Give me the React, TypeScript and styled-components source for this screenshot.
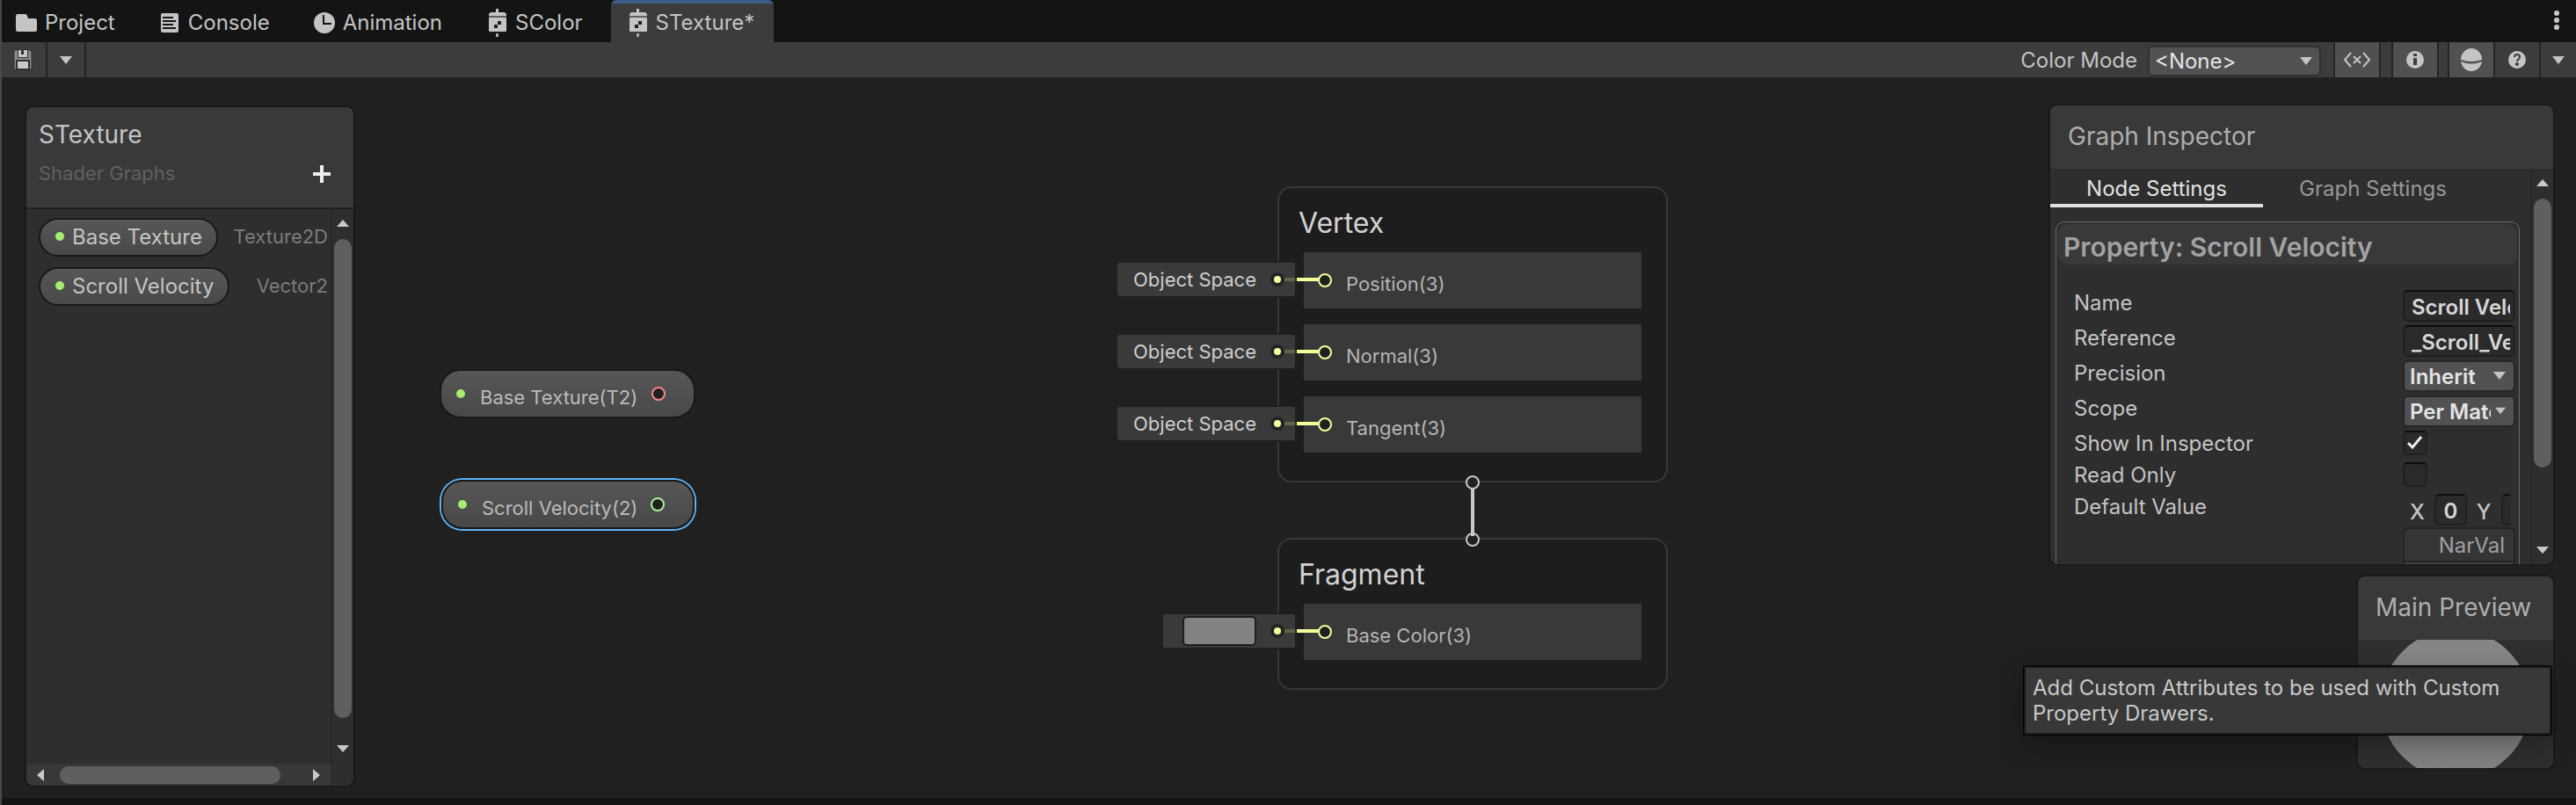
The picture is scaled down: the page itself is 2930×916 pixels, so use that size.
import React from 'react';
import styled, { createGlobalStyle, css } from 'styled-components';

const GlobalStyle = createGlobalStyle`
  *, *::before, *::after { box-sizing: border-box; }
  body { margin: 0; background: #141414; }
  body, button, input, select { font-family: Inter, "Liberation Sans", sans-serif; }
  button { border: 0; padding: 0; background: none; color: inherit; cursor: pointer; }
`;

const Window = styled.div`
  position: relative;
  display: flex;
  flex-direction: column;
  min-height: 100vh;
  color: #c4c4c4;
  font-size: 24px;
  line-height: 29px;
  overflow: hidden;
  &::before {
    content: '';
    position: absolute;
    z-index: 3;
    top: 0;
    bottom: 0;
    left: 0;
    width: 2px;
    background: #484848;
  }
`;

/* ---------- window tabs ---------- */

const TabBar = styled.header`
  display: flex;
  justify-content: space-between;
  height: 48px;
  background: #141414;
`;

const TabList = styled.nav`
  display: flex;
  gap: 12px;
`;

const WindowTab = styled.button<{ $active?: boolean }>`
  display: flex;
  align-items: center;
  gap: 9px;
  padding: 3px 20px 0 18px;
  font-size: 24px;
  line-height: 29px;
  border-radius: 6px 6px 0 0;
  ${(p) =>
    p.$active &&
    css`
      padding-right: 22px;
      background: linear-gradient(#3b5f8a 4px, #3c3c3c 4px);
    `}
`;

const MenuButton = styled.button`
  width: 44px;
`;

/* ---------- toolbar ---------- */

const Toolbar = styled.div`
  display: flex;
  justify-content: space-between;
  height: 40px;
  background: #3c3c3c;
`;

const ToolGroup = styled.div`
  display: flex;
  align-items: stretch;
`;

const ToolButton = styled.button<{ $width: number; $on?: boolean; $left?: boolean; $right?: boolean; $gap?: number }>`
  display: flex;
  align-items: center;
  justify-content: center;
  box-sizing: content-box;
  width: ${(p) => p.$width}px;
  margin-right: ${(p) => p.$gap || 0}px;
  background: ${(p) => (p.$on ? '#505050' : 'transparent')};
  border-style: solid;
  border-color: #242424;
  border-width: 0 ${(p) => (p.$right ? 2 : 0)}px 0 ${(p) => (p.$left ? 2 : 0)}px;
`;

const ColorModeLabel = styled.label`
  display: flex;
  align-items: center;
  gap: 12px;
  margin-right: 14px;
`;

const SelectBox = styled.span<{ $mode?: boolean }>`
  position: relative;
  display: block;
  width: ${(p) => (p.$mode ? 197 : 128)}px;
  ${(p) => p.$mode && 'margin-top: 3px;'}
  svg {
    position: absolute;
    right: ${(p) => (p.$mode ? 10 : 11)}px;
    top: 13px;
    pointer-events: none;
  }
`;

const Select = styled.select<{ $mode?: boolean }>`
  appearance: none;
  display: block;
  width: 100%;
  height: ${(p) => (p.$mode ? 35 : 36)}px;
  padding: 0 ${(p) => (p.$mode ? 30 : 26)}px 0 6px;
  color: #e4e4e4;
  font-size: 24px;
  font-weight: ${(p) => (p.$mode ? 400 : 600)};
  background: #515151;
  border: 2px solid ${(p) => (p.$mode ? '#303030' : '#262626')};
  border-radius: 6px;
`;

/* ---------- graph canvas ---------- */

const Canvas = styled.main`
  position: relative;
  flex: 1;
  min-height: 780px;
  background: #202020;
`;

const Footer = styled.footer`
  height: 8px;
  background: #141414;
`;

const Panel = styled.section`
  position: absolute;
  display: flex;
  flex-direction: column;
  overflow: hidden;
  background: #2e2e2e;
  border: 2px solid #191919;
  border-radius: 10px;
`;

const PanelTitle = styled.h2`
  margin: 0;
  font-size: 28px;
  line-height: 34px;
  font-weight: 400;
`;

const PanelHeader = styled.div`
  padding: 18px 20px 20px;
  color: #aeaeae;
  background: #393939;
`;

/* blackboard */

const Blackboard = styled(Panel)`
  top: 32px;
  bottom: 12px;
  left: 28px;
  width: 376px;
`;

const BoardHeader = styled.div`
  display: flex;
  align-items: flex-end;
  justify-content: space-between;
  padding: 14px 26px 25px 14px;
  background: #393939;
  border-bottom: 2px solid #1f1f1f;
`;

const BoardSubtitle = styled.p`
  margin: 14px 0 0;
  color: #606060;
  font-size: 22px;
  line-height: 27px;
`;

const AddButton = styled.button`
  display: flex;
  align-items: center;
  height: 27px;
`;

const BoardBody = styled.div`
  display: grid;
  flex: 1;
  grid-template-columns: 1fr 26px;
  grid-template-rows: 1fr 26px;
`;

const PropertyList = styled.ul`
  display: flex;
  flex-direction: column;
  gap: 12px;
  margin: 0;
  padding: 10px 3px 0 14px;
  list-style: none;
`;

const PropertyItem = styled.li`
  display: flex;
  align-items: center;
  justify-content: space-between;
`;

const PropertyPill = styled.span`
  display: flex;
  align-items: center;
  gap: 9px;
  height: 44px;
  padding: 0 16px 2px 17px;
  background: linear-gradient(#575757, #484848);
  border: 2px solid #191919;
  border-radius: 22px;
`;

const Dot = styled.i`
  flex: none;
  width: 10px;
  height: 10px;
  background: #a6ec70;
  border-radius: 50%;
`;

const TypeName = styled.span`
  padding-bottom: 2px;
  color: #7c7c7c;
  font-size: 22px;
`;

/* scroll bars */

const Scroller = styled.div<{ $horizontal?: boolean }>`
  display: flex;
  flex-direction: ${(p) => (p.$horizontal ? 'row' : 'column')};
  background: ${(p) => (p.$horizontal ? '#383838' : '#2e2e2e')};
  border: 0 solid ${(p) => (p.$horizontal ? '#333333' : '#282828')};
  border-width: ${(p) => (p.$horizontal ? '2px 0 0 0' : '0 0 0 2px')};
`;

const ScrollArrow = styled.button<{ $horizontal?: boolean }>`
  display: flex;
  flex: none;
  align-items: center;
  justify-content: center;
  width: ${(p) => (p.$horizontal ? '38px' : 'auto')};
  height: ${(p) => (p.$horizontal ? 'auto' : '34px')};
  &:first-child {
    padding: ${(p) => (p.$horizontal ? '0 6px 0 0' : '0 0 2px')};
  }
  &:last-child {
    padding: ${(p) => (p.$horizontal ? '0 0 0 6px' : '2px 0 0')};
  }
`;

const ScrollTrack = styled.div<{ $horizontal?: boolean }>`
  flex: 1;
  padding: ${(p) => (p.$horizontal ? '2px 0' : '0 2px')};
`;

const ScrollThumb = styled.div<{ $horizontal?: boolean; $size: number }>`
  width: ${(p) => (p.$horizontal ? `${p.$size}%` : '20px')};
  height: ${(p) => (p.$horizontal ? '20px' : `${p.$size}%`)};
  background: #5f5f5f;
  border-radius: 10px;
`;

/* property nodes */

const Node = styled.div<{ $x: number; $y: number; $width: number; $selected?: boolean }>`
  position: absolute;
  left: ${(p) => p.$x}px;
  top: ${(p) => p.$y}px;
  display: flex;
  align-items: center;
  gap: 17px;
  width: ${(p) => p.$width}px;
  height: 56px;
  padding: 0 32px 0 17px;
  color: #bababa;
  font-size: 22px;
  line-height: 27px;
  background: linear-gradient(#575757, #484848);
  border: 2px solid #191919;
  border-radius: 24px;
  box-shadow: ${(p) => (p.$selected ? '0 0 0 2px #5eb4f7' : 'none')};
`;

const NodeName = styled.span`
  flex: 1;
  min-width: 0;
  padding-top: 8px;
  white-space: nowrap;
`;

const Socket = styled.i<{ $color: string }>`
  flex: none;
  width: 16px;
  height: 16px;
  background: #202020;
  border: 2px solid ${(p) => p.$color};
  border-radius: 50%;
`;

/* vertex and fragment contexts */

const ContextBlock = styled.section<{ $y: number }>`
  position: absolute;
  left: 1453px;
  top: ${(p) => p.$y}px;
  width: 444px;
  padding: 20px 28px 32px;
  background: #1d1d1d;
  border: 2px solid #383838;
  border-radius: 16px;
`;

const ContextTitle = styled.h2`
  margin: 0 0 14px -6px;
  color: #d2d2d2;
  font-size: 32px;
  line-height: 39px;
  font-weight: 400;
`;

const Blocks = styled.div`
  display: grid;
  gap: 18px;
`;

const Block = styled.div`
  position: relative;
  padding: 23px 0 14px 48px;
  color: #b4b4b4;
  font-size: 22px;
  line-height: 27px;
  background: #393939;
`;

const InputTag = styled.div`
  position: absolute;
  top: 12px;
  right: calc(100% + 10px);
  display: flex;
  align-items: center;
  height: 38px;
  padding: 0 44px 0 18px;
  color: #cecece;
  white-space: nowrap;
  background: rgba(60, 60, 60, 0.93);
  border-radius: 2px;
  box-shadow: 0 0 0 2px #1f1f1f;
`;

const ColorSwatch = styled.button`
  width: 84px;
  height: 34px;
  margin: 0 0 0 4px;
  background: #828282;
  border: 2px solid #1c1c1c;
  border-radius: 5px;
`;

const Wire = styled.svg`
  position: absolute;
  top: 21px;
  left: -40px;
`;

const ContextLink = styled.svg`
  position: absolute;
  left: 1665px;
  top: 450px;
`;

/* graph inspector */

const Inspector = styled(Panel)`
  top: 30px;
  right: 24px;
  width: 576px;
  height: 526px;
`;

const InspectorBody = styled.div`
  display: grid;
  flex: 1;
  grid-template-columns: 1fr 26px;
  min-height: 0;
`;

const InspectorView = styled.div`
  overflow: hidden;
`;

const InspectorTabs = styled.div`
  display: grid;
  grid-template-columns: 242px 250px;
  height: 44px;
`;

const InspectorTab = styled.button<{ $active?: boolean }>`
  padding-top: 4px;
  color: ${(p) => (p.$active ? '#e2e2e2' : '#989898')};
  font-size: 24px;
  line-height: 29px;
  border-bottom: 4px solid ${(p) => (p.$active ? '#e0e0e0' : 'transparent')};
`;

const PropertyBox = styled.div`
  height: 480px;
  margin: 16px 12px 0 6px;
  padding: 2px;
  border: 1px solid #6a6a6a;
  border-radius: 10px;
`;

const PropertyTitle = styled.h3`
  margin: 0 0 29px;
  padding: 8px 6px 2px;
  color: #a2a2a2;
  font-size: 30px;
  line-height: 36px;
  font-weight: 600;
  background: #393939;
  border-radius: 10px;
`;

const Row = styled.div<{ $height: number }>`
  display: flex;
  justify-content: space-between;
  height: ${(p) => p.$height}px;
  padding: 0 2px 0 18px;
`;

const TextField = styled.input<{ $small?: boolean }>`
  flex: none;
  width: ${(p) => (p.$small ? 37 : 128)}px;
  height: 36px;
  padding: 2px ${(p) => (p.$small ? 0 : 4)}px 0 ${(p) => (p.$small ? 0 : 8)}px;
  color: #d6d6d6;
  font-size: 24px;
  font-weight: 600;
  text-align: ${(p) => (p.$small ? 'center' : 'left')};
  background: #2a2a2a;
  border: 2px solid #202020;
  border-top-color: #0d0d0d;
  border-radius: 6px;
`;

const CheckBox = styled.span`
  position: relative;
  width: 128px;
  height: 28px;
  svg {
    position: absolute;
    top: 6px;
    left: 5px;
    pointer-events: none;
  }
`;

const CheckInput = styled.input`
  appearance: none;
  display: block;
  width: 28px;
  height: 28px;
  margin: 0;
  background: #2a2a2a;
  border: 2px solid #202020;
  border-top-color: #0d0d0d;
  border-radius: 5px;
`;

const VectorField = styled.div`
  display: flex;
  align-items: center;
  gap: 11px;
  width: 122px;
  height: 36px;
  margin-right: 6px;
  padding-left: 8px;
  overflow: hidden;
  font-weight: 500;
  label { padding-top: 4px; }
`;

const AttributeHeader = styled.div`
  display: flex;
  align-items: center;
  justify-content: flex-end;
  width: 128px;
  height: 40px;
  padding-right: 10px;
  color: #a0a0a0;
  background: #353535;
  border: 2px solid #242424;
  border-radius: 6px 6px 0 0;
`;

const AttributeList = styled.div`
  width: 128px;
  height: 60px;
  background: #414141;
  border: 2px solid #242424;
  border-top: 0;
`;

/* main preview */

const Preview = styled(Panel)`
  right: 24px;
  bottom: 32px;
  width: 226px;
  height: 222px;
`;

const PreviewImage = styled.svg`
  flex: 1;
  width: 100%;
  background: #2f2f2f;
`;

const Tooltip = styled.div`
  position: absolute;
  z-index: 2;
  right: 27px;
  bottom: 71px;
  width: 602px;
  padding: 10px 9px 10px 10px;
  color: #c8c8c8;
  background: #383838;
  border: 1px solid #000;
  border-radius: 2px;
  box-shadow: inset 0 0 0 2px #1a1a1a, 0 12px 30px rgba(0, 0, 0, 0.3);
`;

/* ---------- icons ---------- */

const Caret = ({ w = 14, h = 9 }: { w?: number; h?: number }) => (
  <svg width={w} height={h} viewBox="0 0 14 9">
    <path d="M0 0h14L7 9z" fill="#c4c4c4" />
  </svg>
);

const arrowPaths = {
  up: 'M1 12l7-8 7 8z',
  down: 'M1 4h14l-7 8z',
  left: 'M12 1v14L4 8z',
  right: 'M4 1v14l8-7z',
};

const ArrowIcon = ({ dir }: { dir: keyof typeof arrowPaths }) => (
  <svg width="16" height="16" viewBox="0 0 16 16">
    <path d={arrowPaths[dir]} fill="#c8c8c8" />
  </svg>
);

const FolderIcon = () => (
  <svg width="24" height="24" viewBox="1 0 24 24">
    <path d="M1 4q0-2 2-2h9q1 0 2 2l1 3h8q2 0 2 2v11q0 2-2 2H3q-2 0-2-2z" fill="#c4c4c4" />
  </svg>
);

const ConsoleIcon = () => (
  <svg width="24" height="24" viewBox="0 0 24 24">
    <rect x="2" y="1" width="20" height="22" rx="2" fill="#c4c4c4" />
    <path d="M4 6h12M4 10h15M4 14h12M4 18h15" stroke="#141414" strokeWidth="2" />
  </svg>
);

const ClockIcon = () => (
  <svg width="24" height="24" viewBox="0 0 24 24">
    <circle cx="12" cy="12" r="12" fill="#c4c4c4" />
    <path d="M11 3v10h9" fill="none" stroke="#141414" strokeWidth="2" />
  </svg>
);

const ShaderIcon = () => (
  <svg width="24" height="32" viewBox="0 0 24 32">
    <path d="M11 0h3v4h7l2 2v2H3V6l2-2h6z" fill="#c4c4c4" />
    <rect x="3" y="10" width="20" height="16" rx="1" fill="#c4c4c4" />
    <rect x="3" y="8" width="20" height="2" fill="#606060" />
    <path d="M11 28h3v4h-3z" fill="#aaaaaa" />
    <path d="M13 14h4v4h-4zM9 18h4v4H9z" fill="#202020" />
  </svg>
);

const DotsIcon = () => (
  <svg width="6" height="24" viewBox="0 0 6 24" fill="#c8c8c8">
    <circle cx="3" cy="4" r="3" />
    <circle cx="3" cy="12" r="3" />
    <circle cx="3" cy="20" r="3" />
  </svg>
);

const SaveIcon = () => (
  <svg width="22" height="24" viewBox="0 0 22 24">
    <path d="M1 1h18l2 2v20H1z" fill="#8a8a8a" stroke="#303030" />
    <path d="M5 0h12v10H5z" fill="#303030" />
    <path d="M6 1h3v5h3V1h4v8H6z" fill="#c8c8c8" />
    <path d="M3 12h16v12H3z" fill="#303030" />
    <path d="M5 14h12v8H5z" fill="#c8c8c8" />
  </svg>
);

const VariantIcon = () => (
  <svg width="32" height="20" viewBox="0 0 32 20" fill="none" stroke="#c4c4c4" strokeWidth="2">
    <path d="M9 2L2 10l7 8M23 2l7 8-7 8M12 6l8 8M20 6l-8 8" />
  </svg>
);

const InfoIcon = () => (
  <svg width="20" height="20" viewBox="0 0 20 20">
    <circle cx="10" cy="10" r="10" fill="#c4c4c4" />
    <path d="M8 3h4v3H8zM8 8h4v8H8z" fill="#404040" />
  </svg>
);

const SphereIcon = () => (
  <svg width="24" height="26" viewBox="0 0 24 26">
    <ellipse cx="12" cy="13" rx="12" ry="13" fill="#c4c4c4" />
    <path d="M0 13q12 4 24 0v2q-12 5-24 0z" fill="#505050" />
  </svg>
);

const HelpIcon = () => (
  <svg width="20" height="20" viewBox="0 0 20 20">
    <circle cx="10" cy="10" r="10" fill="#c4c4c4" />
    <path d="M7 7q0-3 3-3t3 3q0 2-2 3-1 1-1 2" fill="none" stroke="#3c3c3c" strokeWidth="2" />
    <circle cx="10" cy="15" r="2" fill="#3c3c3c" />
  </svg>
);

const PlusIcon = () => (
  <svg width="20" height="20" viewBox="0 0 20 20">
    <path d="M10 0v20M0 10h20" stroke="#ededed" strokeWidth="4" />
  </svg>
);

const CheckIcon = () => (
  <svg width="18" height="15" viewBox="0 0 18 15">
    <path d="M1 8l5 5L16 1" fill="none" stroke="#ececec" strokeWidth="3" />
  </svg>
);

/* ---------- composed parts ---------- */

function VerticalScroller({ size }: { size: number }) {
  return (
    <Scroller>
      <ScrollArrow aria-label="Scroll up"><ArrowIcon dir="up" /></ScrollArrow>
      <ScrollTrack><ScrollThumb $size={size} /></ScrollTrack>
      <ScrollArrow aria-label="Scroll down"><ArrowIcon dir="down" /></ScrollArrow>
    </Scroller>
  );
}

function HorizontalScroller({ size }: { size: number }) {
  return (
    <Scroller $horizontal>
      <ScrollArrow $horizontal aria-label="Scroll left"><ArrowIcon dir="left" /></ScrollArrow>
      <ScrollTrack $horizontal><ScrollThumb $horizontal $size={size} /></ScrollTrack>
      <ScrollArrow $horizontal aria-label="Scroll right"><ArrowIcon dir="right" /></ScrollArrow>
    </Scroller>
  );
}

function GraphBlock({ name, input }: { name: string; input: React.ReactNode }) {
  return (
    <Block>
      <InputTag>{input}</InputTag>
      <Wire width="76" height="22" viewBox="0 0 76 22">
        <circle cx="10" cy="10" r="8" fill="#242424" />
        <circle cx="10" cy="10" r="4" fill="#f6ff9a" />
        <path d="M18 10h12" stroke="#62644d" strokeWidth="4" />
        <path d="M32 10h26" stroke="#f6ff9a" strokeWidth="4" />
        <circle cx="64" cy="11" r="7" fill="#202020" stroke="#f6ff9a" strokeWidth="2" />
      </Wire>
      {name}
    </Block>
  );
}

const windowTabs = [
  { name: 'Project', icon: <FolderIcon /> },
  { name: 'Console', icon: <ConsoleIcon /> },
  { name: 'Animation', icon: <ClockIcon /> },
  { name: 'SColor', icon: <ShaderIcon /> },
  { name: 'STexture*', icon: <ShaderIcon />, active: true },
];

const properties = [
  { name: 'Base Texture', type: 'Texture2D' },
  { name: 'Scroll Velocity', type: 'Vector2' },
];

export default function App() {
  return (
    <Window>
      <GlobalStyle />
      <TabBar>
        <TabList>
          {windowTabs.map((tab) => (
            <WindowTab key={tab.name} $active={tab.active}>
              {tab.icon}
              {tab.name}
            </WindowTab>
          ))}
        </TabList>
        <MenuButton aria-label="Window menu"><DotsIcon /></MenuButton>
      </TabBar>

      <Toolbar>
        <ToolGroup>
          <ToolButton $width={52} $right aria-label="Save"><SaveIcon /></ToolButton>
          <ToolButton $width={42} $right aria-label="Save options"><Caret /></ToolButton>
        </ToolGroup>
        <ToolGroup>
          <ColorModeLabel>
            Color Mode
            <SelectBox $mode>
              <Select $mode defaultValue="none">
                <option value="none">&lt;None&gt;</option>
              </Select>
              <Caret />
            </SelectBox>
          </ColorModeLabel>
          <ToolButton $width={50} $on $left $right $gap={12} aria-label="Blackboard"><VariantIcon /></ToolButton>
          <ToolButton $width={50} $on $left $right $gap={10} aria-label="Inspector"><InfoIcon /></ToolButton>
          <ToolButton $width={50} $on $left $right aria-label="Preview"><SphereIcon /></ToolButton>
          <ToolButton $width={50} $right aria-label="Help"><HelpIcon /></ToolButton>
          <ToolButton $width={40} aria-label="More"><Caret /></ToolButton>
        </ToolGroup>
      </Toolbar>

      <Canvas>
        <Blackboard>
          <BoardHeader>
            <div>
              <PanelTitle>STexture</PanelTitle>
              <BoardSubtitle>Shader Graphs</BoardSubtitle>
            </div>
            <AddButton aria-label="Add property"><PlusIcon /></AddButton>
          </BoardHeader>
          <BoardBody>
            <PropertyList>
              {properties.map((p) => (
                <PropertyItem key={p.name}>
                  <PropertyPill><Dot />{p.name}</PropertyPill>
                  <TypeName>{p.type}</TypeName>
                </PropertyItem>
              ))}
            </PropertyList>
            <VerticalScroller size={97} />
            <HorizontalScroller size={93} />
          </BoardBody>
        </Blackboard>

        <Node $x={500} $y={332} $width={291}>
          <Dot />
          <NodeName>Base Texture(T2)</NodeName>
          <Socket $color="#f58a8a" />
        </Node>
        <Node $x={502} $y={458} $width={288} $selected>
          <Dot />
          <NodeName>Scroll Velocity(2)</NodeName>
          <Socket $color="#a8f29c" />
        </Node>

        <ContextBlock $y={124}>
          <ContextTitle>Vertex</ContextTitle>
          <Blocks>
            <GraphBlock name="Position(3)" input="Object Space" />
            <GraphBlock name="Normal(3)" input="Object Space" />
            <GraphBlock name="Tangent(3)" input="Object Space" />
          </Blocks>
        </ContextBlock>
        <ContextBlock $y={524}>
          <ContextTitle>Fragment</ContextTitle>
          <Blocks>
            <GraphBlock name="Base Color(3)" input={<ColorSwatch aria-label="Base color" />} />
          </Blocks>
        </ContextBlock>
        <ContextLink width="20" height="84" viewBox="0 0 20 84">
          <circle cx="10" cy="11" r="7" fill="#202020" stroke="#c8c8c8" strokeWidth="2" />
          <circle cx="10" cy="76" r="7" fill="#202020" stroke="#c8c8c8" strokeWidth="2" />
          <path d="M10 18v54" stroke="#c8c8c8" strokeWidth="4" />
        </ContextLink>

        <Inspector>
          <PanelHeader><PanelTitle>Graph Inspector</PanelTitle></PanelHeader>
          <InspectorBody>
            <InspectorView>
              <InspectorTabs>
                <InspectorTab $active>Node Settings</InspectorTab>
                <InspectorTab>Graph Settings</InspectorTab>
              </InspectorTabs>
              <PropertyBox>
                <PropertyTitle>Property: Scroll Velocity</PropertyTitle>
                <Row $height={40}>
                  <label htmlFor="name">Name</label>
                  <TextField id="name" defaultValue="Scroll Velocity" />
                </Row>
                <Row $height={40}>
                  <label htmlFor="reference">Reference</label>
                  <TextField id="reference" defaultValue="_Scroll_Velocity" />
                </Row>
                <Row $height={40}>
                  <label htmlFor="precision">Precision</label>
                  <SelectBox>
                    <Select id="precision"><option>Inherit</option></Select>
                    <Caret />
                  </SelectBox>
                </Row>
                <Row $height={40}>
                  <label htmlFor="scope">Scope</label>
                  <SelectBox>
                    <Select id="scope"><option>Per Material</option></Select>
                    <Caret w={12} h={9} />
                  </SelectBox>
                </Row>
                <Row $height={36}>
                  <label htmlFor="show">Show In Inspector</label>
                  <CheckBox><CheckInput id="show" type="checkbox" defaultChecked /><CheckIcon /></CheckBox>
                </Row>
                <Row $height={36}>
                  <label htmlFor="readonly">Read Only</label>
                  <CheckBox><CheckInput id="readonly" type="checkbox" /></CheckBox>
                </Row>
                <Row $height={38}>
                  <span>Default Value</span>
                  <VectorField>
                    <label htmlFor="vx">X</label>
                    <TextField $small id="vx" defaultValue="0" />
                    <label htmlFor="vy">Y</label>
                    <TextField $small id="vy" />
                  </VectorField>
                </Row>
                <Row $height={100}>
                  <span />
                  <div>
                    <AttributeHeader>NarVal</AttributeHeader>
                    <AttributeList />
                  </div>
                </Row>
              </PropertyBox>
            </InspectorView>
            <VerticalScroller size={80} />
          </InspectorBody>
        </Inspector>

        <Preview>
          <PanelHeader><PanelTitle>Main Preview</PanelTitle></PanelHeader>
          <PreviewImage viewBox="0 0 222 146">
            <defs>
              <linearGradient id="sphere" x1="0" y1="0" x2="0" y2="1">
                <stop offset="0" stopColor="#868686" />
                <stop offset="1" stopColor="#828282" />
              </linearGradient>
            </defs>
            <circle cx="111" cy="73" r="85" fill="url(#sphere)" />
          </PreviewImage>
        </Preview>

        <Tooltip role="tooltip">
          Add Custom Attributes to be used with Custom Property Drawers.
        </Tooltip>
      </Canvas>
      <Footer />
    </Window>
  );
}
